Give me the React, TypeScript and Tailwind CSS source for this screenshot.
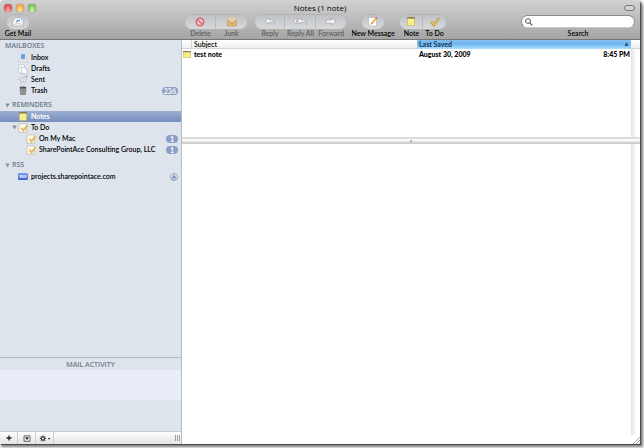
import React from "react";

type IconProps = { className?: string };

const MailIcon = () => (
  <svg viewBox="0 0 14 11" className="h-[11px] w-[14px]">
    <path d="M1.500 4.500 7 1l5.500 3.500V10h-11z" fill="#f4f5f6" stroke="#909398" strokeWidth=".5" />
    <path d="M3.500 2.300h7v4.700l-1.500 1H5L3.500 7z" fill="#fff" stroke="#c3c6ca" strokeWidth=".4" />
    <path d="m1.500 10 4-2.700h3l4 2.700" fill="none" stroke="#b0b3b7" strokeWidth=".5" />
    <path d="m5.300 6 1.400-1.300 1 .3L9 3.500" fill="none" stroke="#3f8fdc" strokeWidth="1.100" />
  </svg>
);
const DeleteIcon = () => (
  <svg viewBox="0 0 10 10" className="size-[10px]">
    <circle cx="5" cy="5" r="3.700" fill="#e9cfd2" stroke="#d9656c" strokeWidth="1.500" />
    <path d="m2.500 2.700 5 4.600" stroke="#d9656c" strokeWidth="1.500" />
  </svg>
);
const JunkIcon = () => (
  <svg viewBox="0 0 12 11" className="h-[11px] w-[12px]">
    <path d="M2.500 1h7v5h-7z" fill="#f0e3c8" stroke="#c9a56a" strokeWidth=".5" />
    <path d="M4 2.500h4M4 4h4" stroke="#b3a78f" strokeWidth=".6" />
    <path d="M1.500 4.500 2.500 4v1.500h1.300l1 1.300h2.400l1-1.300h1.300V4l1 .5V10h-9z" fill="#e0b36c" stroke="#bd914f" strokeWidth=".5" />
  </svg>
);
const ReplyIcon = () => (
  <svg viewBox="0 0 12 9" className="h-[9px] w-[12px]">
    <path d="M1 4 5 1v1.800c3 0 5 1.200 6 4.700C9.300 5.600 7.500 5.200 5 5.200V7z" fill="#f6f6f6" stroke="#8f8f8f" strokeWidth=".5" />
  </svg>
);
const ReplyAllIcon = () => (
  <svg viewBox="0 0 16 9" className="h-[9px] w-[16px]">
    <path d="M1 4 5 1v2L4 4l1 1v2z" fill="#f6f6f6" stroke="#8f8f8f" strokeWidth=".5" />
    <path d="M5 4 9 1v1.800c3 0 5 1.200 6 4.700C13.300 5.600 11.500 5.200 9 5.200V7z" fill="#f6f6f6" stroke="#8f8f8f" strokeWidth=".5" />
  </svg>
);
const ForwardIcon = () => (
  <svg viewBox="0 0 12 9" className="h-[9px] w-[12px]">
    <path d="M1 3h5.500V1L11 4.500 6.500 8V6H1z" fill="#f6f6f6" stroke="#8f8f8f" strokeWidth=".5" />
  </svg>
);
const ComposeIcon = () => (
  <svg viewBox="0 0 12 11" className="h-[11px] w-[12px]">
    <path d="M1.500 1.500h8v8.500h-8z" fill="#fff" stroke="#a3a3a3" strokeWidth=".5" />
    <path d="M4.400 7.800 9.300 2.300" stroke="#f2a33c" strokeWidth="1.700" />
    <path d="m9.100 2.500 1.200-1.400" stroke="#d87664" strokeWidth="1.700" />
    <path d="m3.700 8.600 1-1.200" stroke="#555" strokeWidth=".8" />
  </svg>
);
const NoteIcon = ({ className = "h-[9px] w-[8px]" }: IconProps) => (
  <svg viewBox="0 0 8 9" preserveAspectRatio="none" className={className}>
    <path d="M.4.500h7.200v8H.4z" fill="#fcf48c" stroke="#b3aa62" strokeWidth=".6" />
    <path d="M.1.200h7.800v1.400H.1z" fill="#7c6f52" />
    <path d="M1.300 3.800h5.400M1.300 5.400h5.400M1.300 7h5.400" stroke="#e9df74" strokeWidth=".4" />
  </svg>
);
const CheckIcon = () => (
  <svg viewBox="0 0 10 10" className="size-[10px]">
    <path d="m1.300 4.800 2.800 3.500L8.700 1" fill="none" stroke="#8f7536" strokeWidth="2.200" />
    <path d="m1.400 4.800 2.700 3.300L8.500 1.300" fill="none" stroke="#f6cd4a" strokeWidth="1.400" />
  </svg>
);
const InboxIcon = () => (
  <svg viewBox="0 0 10 9" className="h-[9px] w-[10px]">
    <path d="M2 .3h6v6.200H2z" fill="#eef4fa" stroke="#b2c0d0" strokeWidth=".4" />
    <path d="M3 1.200h4v4.600H3z" fill="#6b9fd8" />
    <path d="M.5 8.600 1.500 5.800h1l.7 1h3.600l.7-1h1l1 2.800z" fill="#fafafa" stroke="#9fa6b0" strokeWidth=".4" />
  </svg>
);
const DraftsIcon = () => (
  <svg viewBox="0 0 10 10" className="size-[10px]">
    <path d="M1 .7h4.300l1.200 1.200v7H1z" fill="#fff" stroke="#a6abb2" strokeWidth=".5" />
    <path d="M3.700 3.300h3.300l2 2v4.200H3.700z" fill="#fff" stroke="#9ba1a9" strokeWidth=".5" />
    <path d="M7 3.300v2h2M2.200 2.700H4M2.200 4.200h1" fill="none" stroke="#a7adb5" strokeWidth=".4" />
  </svg>
);
const SentIcon = () => (
  <svg viewBox="0 0 10 9" className="h-[9px] w-[10px]">
    <path d="M.7 4.500 9.300.7 7.200 7.500 5 6 3.200 8.300 2.800 5.700z" fill="#fafafa" stroke="#8d939b" strokeWidth=".5" />
    <path d="M2.800 5.700 9.300.7 5 6" fill="none" stroke="#9ba0a8" strokeWidth=".5" />
  </svg>
);
const TrashIcon = () => (
  <svg viewBox="0 0 8 9" className="h-[9px] w-[8px]">
    <path d="M1 1.500h6L6.400 8.600H1.600z" fill="#818181" stroke="#5c5c5c" strokeWidth=".5" />
    <path d="M2.500 3v5M4 3v5M5.500 3v5" stroke="#b0b0b0" strokeWidth=".5" />
    <ellipse cx="4" cy="1.400" rx="3.300" ry=".9" fill="#505050" />
  </svg>
);
const TodoIcon = () => (
  <svg viewBox="0 0 10 10" className="size-[10px]">
    <path d="M1 .8h7.700v8.600H1z" fill="#fcf7e8" stroke="#aaa28f" strokeWidth=".5" />
    <path d="m3.500 4.800 2 2.700L9.300 2.600" fill="none" stroke="#d3a03a" strokeWidth="1.600" />
    <path d="m3.500 4.800 2 2.700L9.300 2.600" fill="none" stroke="#f6c957" strokeWidth=".9" />
  </svg>
);
const RssIcon = () => (
  <span className="flex h-[7px] w-[10px] items-center justify-center rounded-[1px] bg-linear-to-b from-[#7f9df5] to-[#3c5fd6] text-[4px] leading-none font-bold text-white">
    RSS
  </span>
);
const Triangle = () => (
  <svg viewBox="0 0 5 5" className="size-[5px]">
    <path d="M.3.500h4.400L2.500 4.500z" fill="#85909d" />
  </svg>
);

type ToolProps = { label: string; icon: React.ReactNode; width: string; disabled?: boolean };
function Tool({ label, icon, width, disabled }: ToolProps) {
  return (
    <button type="button" disabled={disabled} className={`group flex flex-col items-center ${width}`}>
      <span className="flex h-[13px] w-full items-center justify-center border-r border-[#b3b6ba] bg-linear-to-b from-[#bfc1c4] to-[#d6d9dc] shadow-[0_1px_0_#d6d6d6,0_-1px_0_#b4b4b4] group-first:rounded-l-full group-last:rounded-r-full group-last:border-r-0">
        {icon}
      </span>
      <span className={`mt-px h-[9px] text-[7px] leading-[9px] whitespace-nowrap ${disabled ? "text-[#5f5f5f]" : "text-black"}`}>
        {label}
      </span>
    </button>
  );
}

function Badge({ children }: { children: React.ReactNode }) {
  return (
    <span className="ml-auto flex h-2 min-w-3 items-center justify-center rounded-full bg-[#8b9fc6] px-[2px] text-[7px] leading-[8px] font-bold text-white">
      {children}
    </span>
  );
}

type RowProps = { icon: React.ReactNode; label: string; pad?: string; selected?: boolean; badge?: React.ReactNode };
function Row({ icon, label, pad = "pl-[17px]", selected, badge }: RowProps) {
  return (
    <li>
      <a
        href="#"
        className={`flex h-[11px] items-center pr-[3px] ${pad} ${
          selected ? "bg-linear-to-b from-[#9dafd2] to-[#768fbd] font-bold text-white" : "text-black"
        }`}
      >
        <span className="mr-[2px] flex w-3 justify-center">{icon}</span>
        {label}
        {badge}
      </a>
    </li>
  );
}

function Section({ label, open }: { label: string; open?: boolean }) {
  return (
    <h2 className="flex h-[11px] items-center gap-[2px] pl-[5px] font-['Open_Sans','Noto_Sans',sans-serif] text-[7px] font-semibold text-[#6a7888]">
      {open && <Triangle />}
      {label}
    </h2>
  );
}

export default function App() {
  return (
    <div className="h-screen overflow-hidden bg-white pr-1 pb-1 font-['Lato','Open_Sans',sans-serif] text-[7px] font-semibold">
      <div className="flex h-full flex-col rounded-t-[4px] bg-white shadow-[1px_1px_0_#4a4a4a,2px_2px_3px_1px_#777]">
        <header className="flex h-10 shrink-0 flex-col rounded-t-[4px] border-b border-[#767676] bg-linear-to-b from-[#d2d2d2] to-[#a5a5a5]">
          <div className="flex h-[15px] items-center pt-px">
            <div className="flex w-12 gap-1 pl-1">
              <button type="button" aria-label="Close" className="size-[8px] rounded-full bg-radial-[at_50%_85%] from-[#ffb0aa] to-[#cf1f2c] shadow-[0_0_1px_#6b2020]" />
              <button type="button" aria-label="Minimize" className="size-[8px] rounded-full bg-radial-[at_50%_85%] from-[#fff0a8] to-[#e5811c] shadow-[0_0_1px_#7a4a18]" />
              <button type="button" aria-label="Zoom" className="size-[8px] rounded-full bg-radial-[at_50%_85%] from-[#d9fbb4] to-[#4ea02c] shadow-[0_0_1px_#355f1e]" />
            </div>
            <h1 className="flex-1 text-center font-['Open_Sans','Noto_Sans',sans-serif] text-[8px] leading-[10px] font-medium text-black">Notes (1 note)</h1>
            <div className="flex w-12 justify-end pr-[5px]">
              <button type="button" aria-label="Hide toolbar" className="h-[6px] w-[11px] rounded-full border border-[#777] bg-[#d4d4d4]" />
            </div>
          </div>
          <div className="flex">
            <div className="flex w-[185px] shrink-0 pl-[7px]">
              <Tool label="Get Mail" icon={<MailIcon />} width="w-[22px]" />
            </div>
            <div className="flex">
              <Tool disabled label="Delete" icon={<DeleteIcon />} width="w-[31px]" />
              <Tool disabled label="Junk" icon={<JunkIcon />} width="w-[31px]" />
            </div>
            <div className="ml-2 flex">
              <Tool disabled label="Reply" icon={<ReplyIcon />} width="w-[30px]" />
              <Tool disabled label="Reply All" icon={<ReplyAllIcon />} width="w-[31px]" />
              <Tool disabled label="Forward" icon={<ForwardIcon />} width="w-[30px]" />
            </div>
            <div className="ml-4 flex">
              <Tool label="New Message" icon={<ComposeIcon />} width="w-[22px]" />
            </div>
            <div className="ml-4 flex">
              <Tool label="Note" icon={<NoteIcon />} width="w-[23px]" />
              <Tool label="To Do" icon={<CheckIcon />} width="w-[23px]" />
            </div>
            <div className="mr-[5px] ml-auto flex w-[114px] flex-col items-center">
              <div className="flex h-[13px] w-full items-center rounded-full border border-[#8b8b8b] border-b-[#c8c8c8] bg-white pl-[3px]">
                <svg viewBox="0 0 8 8" className="size-[8px] shrink-0">
                  <circle cx="3" cy="3" r="2.400" fill="none" stroke="#555" strokeWidth="1" />
                  <path d="m4.800 4.800 2.500 2.500" stroke="#555" strokeWidth="1.200" />
                </svg>
                <input id="search" type="text" className="min-w-0 flex-1 bg-transparent px-1 outline-none" />
              </div>
              <label htmlFor="search" className="mt-px h-[9px] leading-[9px] text-black">
                Search
              </label>
            </div>
          </div>
        </header>

        <div className="flex min-h-0 flex-1">
          <aside className="flex w-[182px] shrink-0 flex-col border-r border-[#b9bcc1] bg-[#dde4ec]">
            <nav className="flex-1">
              <div className="pt-px">
                <Section label="MAILBOXES" />
                <ul>
                  <Row icon={<InboxIcon />} label="Inbox" />
                  <Row icon={<DraftsIcon />} label="Drafts" />
                  <Row icon={<SentIcon />} label="Sent" />
                  <Row icon={<TrashIcon />} label="Trash" badge={<Badge>236</Badge>} />
                </ul>
              </div>
              <div className="pt-1">
                <Section label="REMINDERS" open />
                <ul>
                  <Row icon={<NoteIcon />} label="Notes" selected />
                  <li className="relative">
                    <span className="absolute top-[3px] left-[12px]">
                      <Triangle />
                    </span>
                    <ul>
                      <Row icon={<TodoIcon />} label="To Do" />
                      <Row icon={<TodoIcon />} label="On My Mac" pad="pl-[25px]" badge={<Badge>1</Badge>} />
                      <Row icon={<TodoIcon />} label="SharePointAce Consulting Group, LLC" pad="pl-[25px]" badge={<Badge>1</Badge>} />
                    </ul>
                  </li>
                </ul>
              </div>
              <div className="pt-[5px]">
                <Section label="RSS" open />
                <ul>
                  <Row
                    icon={<RssIcon />}
                    label="projects.sharepointace.com"
                    badge={
                      <svg viewBox="0 0 8 8" className="ml-auto size-[8px]">
                        <circle cx="4" cy="4" r="3.600" fill="#dde4ec" stroke="#8b9fc6" strokeWidth=".8" />
                        <path d="M4 1.300 6.300 5H1.700z" fill="#7f95c0" />
                        <path d="M1.700 6h4.600" stroke="#7f95c0" strokeWidth="1" />
                      </svg>
                    }
                  />
                </ul>
              </div>
            </nav>
            <section>
              <h2 className="h-[13px] border-t border-[#b4b9c0] text-center font-['Open_Sans','Noto_Sans',sans-serif] leading-[13px] font-semibold text-[#747d88]">
                MAIL ACTIVITY
              </h2>
              <div className="h-[30px] bg-[#e8edf7]" />
              <div className="h-[31px]" />
            </section>
            <footer className="flex h-[13px] border-t border-[#c6c9cd] bg-linear-to-b from-white to-[#e4e4e4]">
              <button type="button" aria-label="Add mailbox" className="flex w-[18px] items-center justify-center border-r border-[#cfcfcf]">
                <svg viewBox="0 0 6 6" className="size-[6px]">
                  <path d="M3 .5v5M.5 3h5" stroke="#222" strokeWidth="1.300" />
                </svg>
              </button>
              <button type="button" aria-label="Show activity" className="flex w-[18px] items-center justify-center border-r border-[#cfcfcf]">
                <svg viewBox="0 0 8 7" className="h-[7px] w-[8px]">
                  <path d="M1 .8h6v5.500H1z" fill="none" stroke="#444" strokeWidth=".8" />
                  <path d="M2 2.300h4L4 5z" fill="#222" />
                </svg>
              </button>
              <button type="button" aria-label="Actions" className="flex w-[18px] items-center justify-center border-r border-[#cfcfcf]">
                <svg viewBox="0 0 12 7" className="h-[7px] w-[12px]">
                  <circle cx="4" cy="3.500" r="1.700" fill="none" stroke="#333" strokeWidth="1.200" />
                  <path d="M4 .3v1.200M4 5.500v1.200M.8 3.500H2M6 3.500h1.200M1.700 1.200l.9.900M5.400 4.900l.9.900M6.300 1.200l-.9.900M2.600 4.900l-.9.900" stroke="#333" strokeWidth=".9" />
                  <path d="M8.800 3h2.600l-1.300 1.700z" fill="#222" />
                </svg>
              </button>
              <div className="mr-[1px] ml-auto flex items-center gap-px">
                <i className="h-[6px] w-px bg-[#9f9f9f]" />
                <i className="h-[6px] w-px bg-[#9f9f9f]" />
                <i className="h-[6px] w-px bg-[#9f9f9f]" />
              </div>
            </footer>
          </aside>

          <main className="flex min-w-0 flex-1 flex-col">
            <section className="flex h-[97px] shrink-0">
              <div className="min-w-0 flex-1">
                <table className="w-full table-fixed border-separate border-spacing-0 text-left">
                  <thead>
                    <tr className="h-[9px] leading-[8px]">
                      <th aria-label="Kind" className="w-[10px] border-r border-b border-[#d6d6d6] bg-linear-to-b from-white to-[#f0f0f0] p-0" />
                      <th className="border-b border-[#d6d6d6] bg-linear-to-b from-white to-[#f0f0f0] p-0 pl-[2px] font-semibold text-black">Subject</th>
                      <th className="w-[214px] border-b border-[#a9dcff] bg-linear-to-b from-[#86c0f0] via-[#6db4ee] to-[#9fd6fc] p-0 font-semibold text-[#0c2540]">
                        <span className="flex items-center justify-between px-[2px]">
                          Last Saved
                          <svg viewBox="0 0 5 4" className="h-[4px] w-[5px]">
                            <path d="M2.500 0 4.500 4H.5z" fill="#2b557f" />
                          </svg>
                        </span>
                      </th>
                    </tr>
                  </thead>
                  <tbody>
                    <tr className="h-[10px] font-['Lato','Open_Sans',sans-serif] leading-[9px] font-black text-black">
                      <td className="p-0">
                        <NoteIcon className="ml-px h-[7px] w-[8px]" />
                      </td>
                      <td className="p-0 pl-[2px]">test note</td>
                      <td className="p-0">
                        <span className="flex justify-between pr-px pl-[2px]">
                          <span>August 30, 2009</span>
                          <span>8:45 PM</span>
                        </span>
                      </td>
                    </tr>
                  </tbody>
                </table>
              </div>
              <div className="flex w-[9px] flex-col">
                <div className="h-[9px] border-b border-[#d6d6d6] bg-linear-to-b from-white to-[#f0f0f0]" />
                <div className="flex-1 bg-linear-to-r from-[#e3e3e3] to-white to-60%" />
              </div>
            </section>
            <div className="flex h-[7px] shrink-0 items-center justify-center border-y-2 border-t-[#dddddd] border-b-[#cfcfcf] bg-linear-to-b from-white to-[#ececec]">
              <i className="size-[2px] rounded-full bg-[#999]" />
            </div>
            <section className="flex min-h-0 flex-1 justify-end">
              <div className="flex w-[9px] flex-col">
                <div className="flex-1 bg-linear-to-r from-[#e3e3e3] to-white to-60%" />
                <svg viewBox="0 0 9 9" className="size-[9px]">
                  <path d="M2 9 9 2M5 9l4-4M7.500 9 9 7.500" stroke="#999" strokeWidth=".9" />
                </svg>
              </div>
            </section>
          </main>
        </div>
      </div>
    </div>
  );
}
